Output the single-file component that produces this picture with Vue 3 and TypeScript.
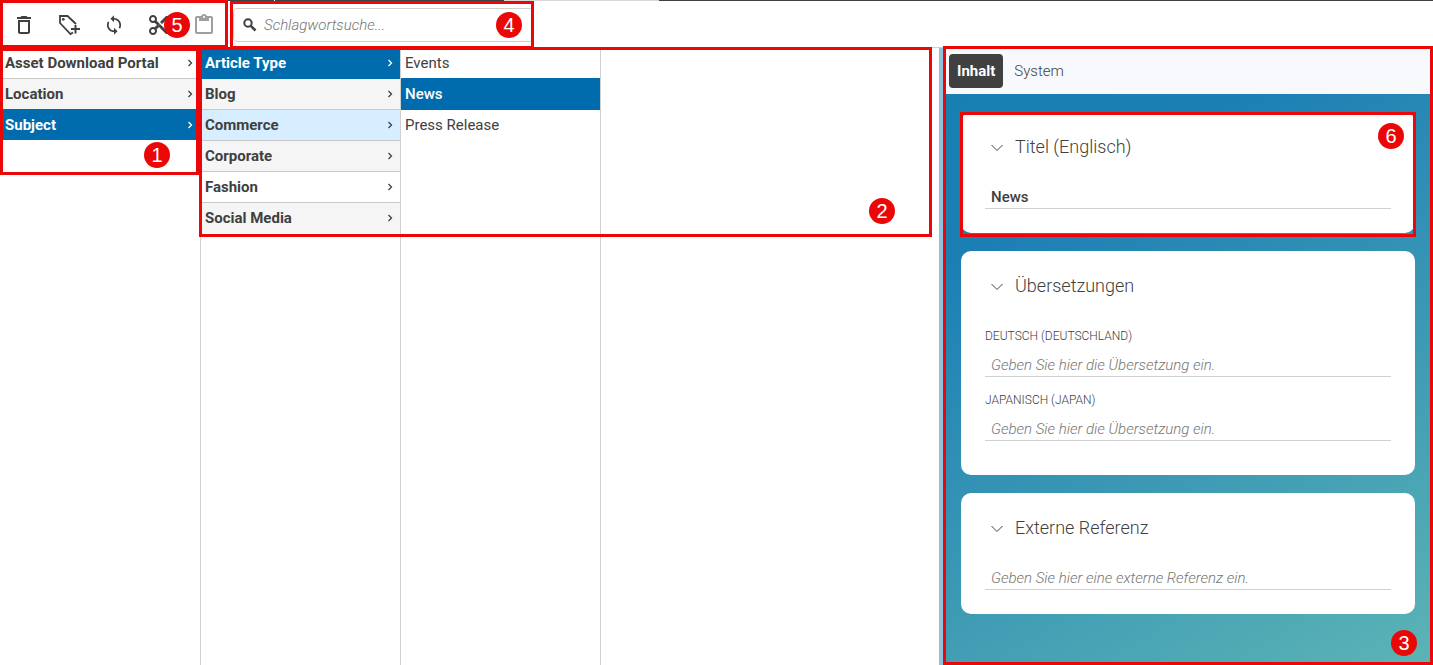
<script setup lang="ts">
import { ref } from 'vue'

interface Tag {
  name: string
  state?: 'selected' | 'hover'
}
interface Column {
  label: string
  leaf: boolean
  tags: Tag[]
}
interface Field {
  id: string
  label: string
  caption: boolean
  placeholder: string
  value: string
}
interface Card {
  title: string
  fields: Field[]
  callout?: number
}

const columns = ref<Column[]>([
  {
    label: 'Kategorien',
    leaf: false,
    tags: [{ name: 'Asset Download Portal' }, { name: 'Location' }, { name: 'Subject', state: 'selected' }],
  },
  {
    label: 'Subject',
    leaf: false,
    tags: [
      { name: 'Article Type', state: 'selected' },
      { name: 'Blog' },
      { name: 'Commerce', state: 'hover' },
      { name: 'Corporate' },
      { name: 'Fashion' },
      { name: 'Social Media' },
    ],
  },
  {
    label: 'Article Type',
    leaf: true,
    tags: [{ name: 'Events' }, { name: 'News', state: 'selected' }, { name: 'Press Release' }],
  },
])

const cards = ref<Card[]>([
  {
    title: 'Titel (Englisch)',
    callout: 6,
    fields: [{ id: 'title-en', label: 'Titel (Englisch)', caption: false, placeholder: '', value: 'News' }],
  },
  {
    title: 'Übersetzungen',
    fields: [
      { id: 'title-de', label: 'Deutsch (Deutschland)', caption: true, placeholder: 'Geben Sie hier die Übersetzung ein.', value: '' },
      { id: 'title-ja', label: 'Japanisch (Japan)', caption: true, placeholder: 'Geben Sie hier die Übersetzung ein.', value: '' },
    ],
  },
  {
    title: 'Externe Referenz',
    fields: [{ id: 'ext-ref', label: 'Externe Referenz', caption: false, placeholder: 'Geben Sie hier eine externe Referenz ein.', value: '' }],
  },
])

const query = ref('')
</script>

<template>
  <div class="page">
    <header class="topbar">
      <div class="tools">
        <button type="button" class="tool" aria-label="Löschen">
          <svg viewBox="0 0 24 24"><path d="M6 19c0 1.100.9 2 2 2h8c1.100 0 2-.9 2-2V7H6v12zM8 9h8v10H8V9zm7.500-5l-1-1h-5l-1 1H5v2h14V4z" /></svg>
        </button>
        <button type="button" class="tool" aria-label="Schlagwort anlegen">
          <svg viewBox="0 0 24 24">
            <path d="M16 19.500 13.500 21 3 10V3h7.500l8.500 8" fill="none" stroke="currentColor" stroke-width="1.800" />
            <circle cx="6.300" cy="6.300" r="1.400" />
            <path d="M17.500 12h2v3h3.500v2h-3.500v3.500h-2V17H14v-2h3.500z" />
          </svg>
        </button>
        <button type="button" class="tool" aria-label="Aktualisieren">
          <svg viewBox="-1.500 -1.500 27 27"><path d="M12 4V1L8 5l4 4V6c3.310 0 6 2.690 6 6 0 1.010-.25 1.970-.7 2.800l1.460 1.460C19.540 15.030 20 13.570 20 12c0-4.420-3.580-8-8-8zm0 14c-3.310 0-6-2.690-6-6 0-1.010.25-1.970.7-2.800L5.240 7.740C4.460 8.970 4 10.430 4 12c0 4.420 3.580 8 8 8v3l4-4-4-4v3z" /></svg>
        </button>
        <button type="button" class="tool" aria-label="Ausschneiden">
          <svg viewBox="0 0 24 24"><path d="M9.640 7.640c.23-.5.36-1.050.36-1.640 0-2.210-1.790-4-4-4S2 3.790 2 6s1.790 4 4 4c.59 0 1.140-.13 1.640-.36L10 12l-2.360 2.360C7.140 14.130 6.590 14 6 14c-2.210 0-4 1.790-4 4s1.790 4 4 4 4-1.790 4-4c0-.59-.13-1.140-.36-1.640L12 14l7 7h3v-1L9.640 7.640zM6 8c-1.100 0-2-.89-2-2s.9-2 2-2 2 .89 2 2-.9 2-2 2zm0 12c-1.100 0-2-.89-2-2s.9-2 2-2 2 .89 2 2-.9 2-2 2zm6-7.500c-.28 0-.5-.22-.5-.5s.22-.5.5-.5.5.22.5.5-.22.5-.5.5zM19 3l-6 6 2 2 7-7V3z" /></svg>
        </button>
        <button type="button" class="tool" aria-label="Einfügen" disabled>
          <svg viewBox="0 0 24 24"><path d="M19 3h-4.180C14.400 1.840 13.300 1 12 1s-2.400.84-2.820 2H5c-1.100 0-2 .9-2 2v14c0 1.100.9 2 2 2h14c1.100 0 2-.9 2-2V5c0-1.100-.9-2-2-2zm-7 0c.55 0 1 .45 1 1s-.45 1-1 1-1-.45-1-1 .45-1 1-1zm7 16H5V5h2v3h10V5h2v14z" /></svg>
        </button>
        <div class="frame frame-tools"><span class="badge">5</span></div>
      </div>
      <div class="search">
        <label class="search-box">
          <svg viewBox="0 0 14 14" aria-hidden="true">
            <circle cx="5" cy="5" r="3.700" fill="none" stroke="currentColor" stroke-width="2" />
            <path d="M7.800 7.800 12.500 12.500" stroke="currentColor" stroke-width="2.600" />
          </svg>
          <input v-model="query" type="search" aria-label="Schlagwortsuche" placeholder="Schlagwortsuche..." />
        </label>
        <div class="frame frame-search"><span class="badge">4</span></div>
      </div>
      <div class="strip"><i class="dark short"></i><i class="dark left"></i><i class="gap"></i><i class="dark right"></i></div>
    </header>

    <main class="content">
      <section class="browser">
        <ul v-for="column in columns" :key="column.label" class="column" :class="{ leaf: column.leaf }" :aria-label="column.label">
          <li v-for="tag in column.tags" :key="tag.name">
            <button type="button" class="row" :class="tag.state">
              <span>{{ tag.name }}</span>
              <svg v-if="!column.leaf" viewBox="0 0 6 8" aria-hidden="true"><path d="M1.500 1 4.500 4 1.500 7" /></svg>
            </button>
          </li>
        </ul>
        <div class="frame frame-root"><span class="badge">1</span></div>
        <div class="frame frame-tree"><span class="badge">2</span></div>
      </section>

      <aside class="detail">
        <nav class="tabs">
          <button type="button" class="tab active">Inhalt</button>
          <button type="button" class="tab">System</button>
        </nav>
        <div class="cards">
          <section v-for="card in cards" :key="card.title" class="card">
            <h2>
              <button type="button" class="card-title" aria-expanded="true">
                <svg viewBox="0 0 12 12" aria-hidden="true"><path d="M.5 5 6 10.500 11.500 5" /></svg>
                {{ card.title }}
              </button>
            </h2>
            <div v-for="field in card.fields" :key="field.id" class="field" :class="{ captioned: field.caption }">
              <label v-if="field.caption" :for="field.id">{{ field.label }}</label>
              <input :id="field.id" v-model="field.value" type="text" :aria-label="field.label" :placeholder="field.placeholder" />
            </div>
            <div v-if="card.callout" class="frame frame-card"><span class="badge">{{ card.callout }}</span></div>
          </section>
        </div>
        <div class="frame frame-detail"><span class="badge">3</span></div>
      </aside>
    </main>
  </div>
</template>

<style>
body {
  margin: 0;
}
</style>

<style scoped>
.page {
  display: flex;
  flex-direction: column;
  min-height: 100vh;
  background: #fff;
  color: #404040;
  font-family: Roboto, "Liberation Sans", sans-serif;
  font-size: 15px;
}
.page *,
.page {
  box-sizing: border-box;
}
button,
input {
  margin: 0;
  padding: 0;
  border: 0;
  background: none;
  color: inherit;
  font: inherit;
}
input {
  outline: 0;
}
input::placeholder {
  color: #757575;
  font-style: italic;
  font-weight: 300;
  opacity: 1;
}

/* Top bar */
.topbar {
  position: relative;
  display: flex;
  height: 48px;
  border-bottom: 1px solid #d0d0d0;
}
.tools {
  position: relative;
  display: flex;
  align-items: center;
  gap: 21px;
  width: 228px;
  padding: 2px 12px 0;
}
.tool {
  width: 24px;
  height: 24px;
}
.tool svg {
  display: block;
  width: 24px;
  height: 24px;
  fill: currentColor;
}
.tool:disabled {
  color: #9e9e9e;
}
.search {
  position: relative;
  display: flex;
  align-items: center;
  width: 304px;
  margin-left: 2px;
  padding: 3px 0 0 3px;
}
.search-box {
  display: flex;
  align-items: center;
  gap: 7px;
  width: 100%;
  height: 34px;
  padding: 0 9px;
  border: 1px solid #d0d0d0;
  border-radius: 4px;
}
.search-box svg {
  flex: none;
  width: 14px;
  height: 14px;
}
.search-box input {
  flex: 1;
  min-width: 0;
}
.strip {
  position: absolute;
  top: 0;
  left: 228px;
  right: 0;
  display: flex;
  height: 1px;
}
.dark {
  background: #404040;
}
.short {
  width: 46px;
  margin-right: 1px;
}
.left {
  width: 229px;
}
.gap {
  width: 155px;
  border-bottom: 1px solid #d8d8d8;
}
.right {
  flex: 1;
}

/* Tag columns */
.content {
  display: flex;
  flex: 1;
}
.browser {
  position: relative;
  display: flex;
  flex: 1;
}
.column {
  width: 200px;
  margin: 0;
  padding: 0;
  border-right: 1px solid #d0d0d0;
  list-style: none;
}
.column:first-child {
  width: 201px;
}
.row {
  display: flex;
  align-items: center;
  justify-content: space-between;
  width: 100%;
  height: 31px;
  padding: 0 7px 0 4px;
  border-bottom: 1px solid #c8c8c8;
  background-clip: padding-box;
  font-weight: 700;
  text-align: left;
}
.column:first-child .row {
  padding-left: 5px;
}
.row svg {
  width: 6px;
  height: 8px;
  fill: none;
  stroke: currentColor;
  stroke-width: 1.3;
}
li:nth-child(even) .row {
  background-color: #f5f5f5;
}
.leaf .row,
.leaf li:nth-child(even) .row {
  border-color: transparent;
  background-color: #fff;
  font-weight: 400;
}
li .row.hover {
  background-color: #d6eeff;
}
li .row.selected,
.leaf li:nth-child(even) .row.selected {
  border-color: #006cae;
  background-color: #006cae;
  box-shadow: 0 -1px 0 #006cae;
  color: #fff;
}
.leaf li:nth-child(even) .row.selected {
  font-weight: 500;
}
li:last-child .row,
li:last-child .row.selected {
  border-color: transparent;
}

/* Detail panel */
.detail {
  position: relative;
  display: flex;
  flex-direction: column;
  width: 494px;
  border-left: 4px solid #8fc1dc;
}
.tabs {
  display: flex;
  align-items: center;
  height: 46px;
  padding: 0 6px;
  background: #f7f9fc;
}
.tab {
  height: 34px;
  padding: 0 11px;
  border-radius: 4px;
  font-weight: 300;
}
.tab.active {
  padding: 0 8px;
  background: #404040;
  color: #fff;
  font-weight: 700;
}
.cards {
  display: flex;
  flex: 1;
  flex-direction: column;
  gap: 18px;
  padding: 18px;
  background: linear-gradient(150deg, #1780b1 0%, #1c7fb4 20%, #5cb4b5 100%);
}
.card {
  position: relative;
  padding: 14px 24px 24px;
  border-radius: 10px;
  background: #fff;
}
h2 {
  margin: 0 0 18px;
  font-size: 18px;
  font-weight: 300;
}
.card-title {
  display: flex;
  align-items: center;
  gap: 12px;
  width: 100%;
  height: 40px;
  padding-left: 6px;
  text-align: left;
}
.card-title svg {
  width: 12px;
  height: 12px;
  fill: none;
  stroke: currentColor;
}
.field {
  display: flex;
  flex-direction: column;
}
.captioned {
  margin-bottom: 10px;
}
.field label {
  margin-bottom: 3px;
  font-size: 12px;
  font-weight: 300;
  line-height: 26px;
  text-transform: uppercase;
}
.field input {
  width: 100%;
  height: 25px;
  padding: 2px 6px 0;
  border-bottom: 1px solid #d0d0d0;
  font-weight: 500;
}

/* Numbered callouts */
.frame {
  position: absolute;
  z-index: 1;
  border: 3px solid #eb0707;
  pointer-events: none;
}
.badge {
  position: absolute;
  width: 26px;
  height: 26px;
  border-radius: 50%;
  background: #eb0707;
  color: #fff;
  font-family: "Liberation Sans", Arial, sans-serif;
  font-size: 20px;
  line-height: 26px;
  text-align: center;
}
.frame-tools {
  inset: 0 0 -1px;
}
.frame-tools .badge {
  top: 9px;
  right: 35px;
}
.frame-search {
  inset: 1px 0 -2px;
}
.frame-search .badge {
  top: 8px;
  right: 9px;
}
.frame-root {
  top: 0;
  left: 0;
  width: 199px;
  height: 127px;
}
.frame-root .badge {
  right: 26px;
  bottom: 4px;
}
.frame-tree {
  top: -1px;
  left: 199px;
  right: 7px;
  height: 190px;
}
.frame-tree .badge {
  right: 34px;
  bottom: 10px;
}
.frame-detail {
  inset: -2px 0 0;
}
.frame-detail .badge {
  right: 13px;
  bottom: 6px;
}
.frame-card {
  inset: 0 -1px -4px;
}
.frame-card .badge {
  top: 8px;
  right: 9px;
}
</style>
